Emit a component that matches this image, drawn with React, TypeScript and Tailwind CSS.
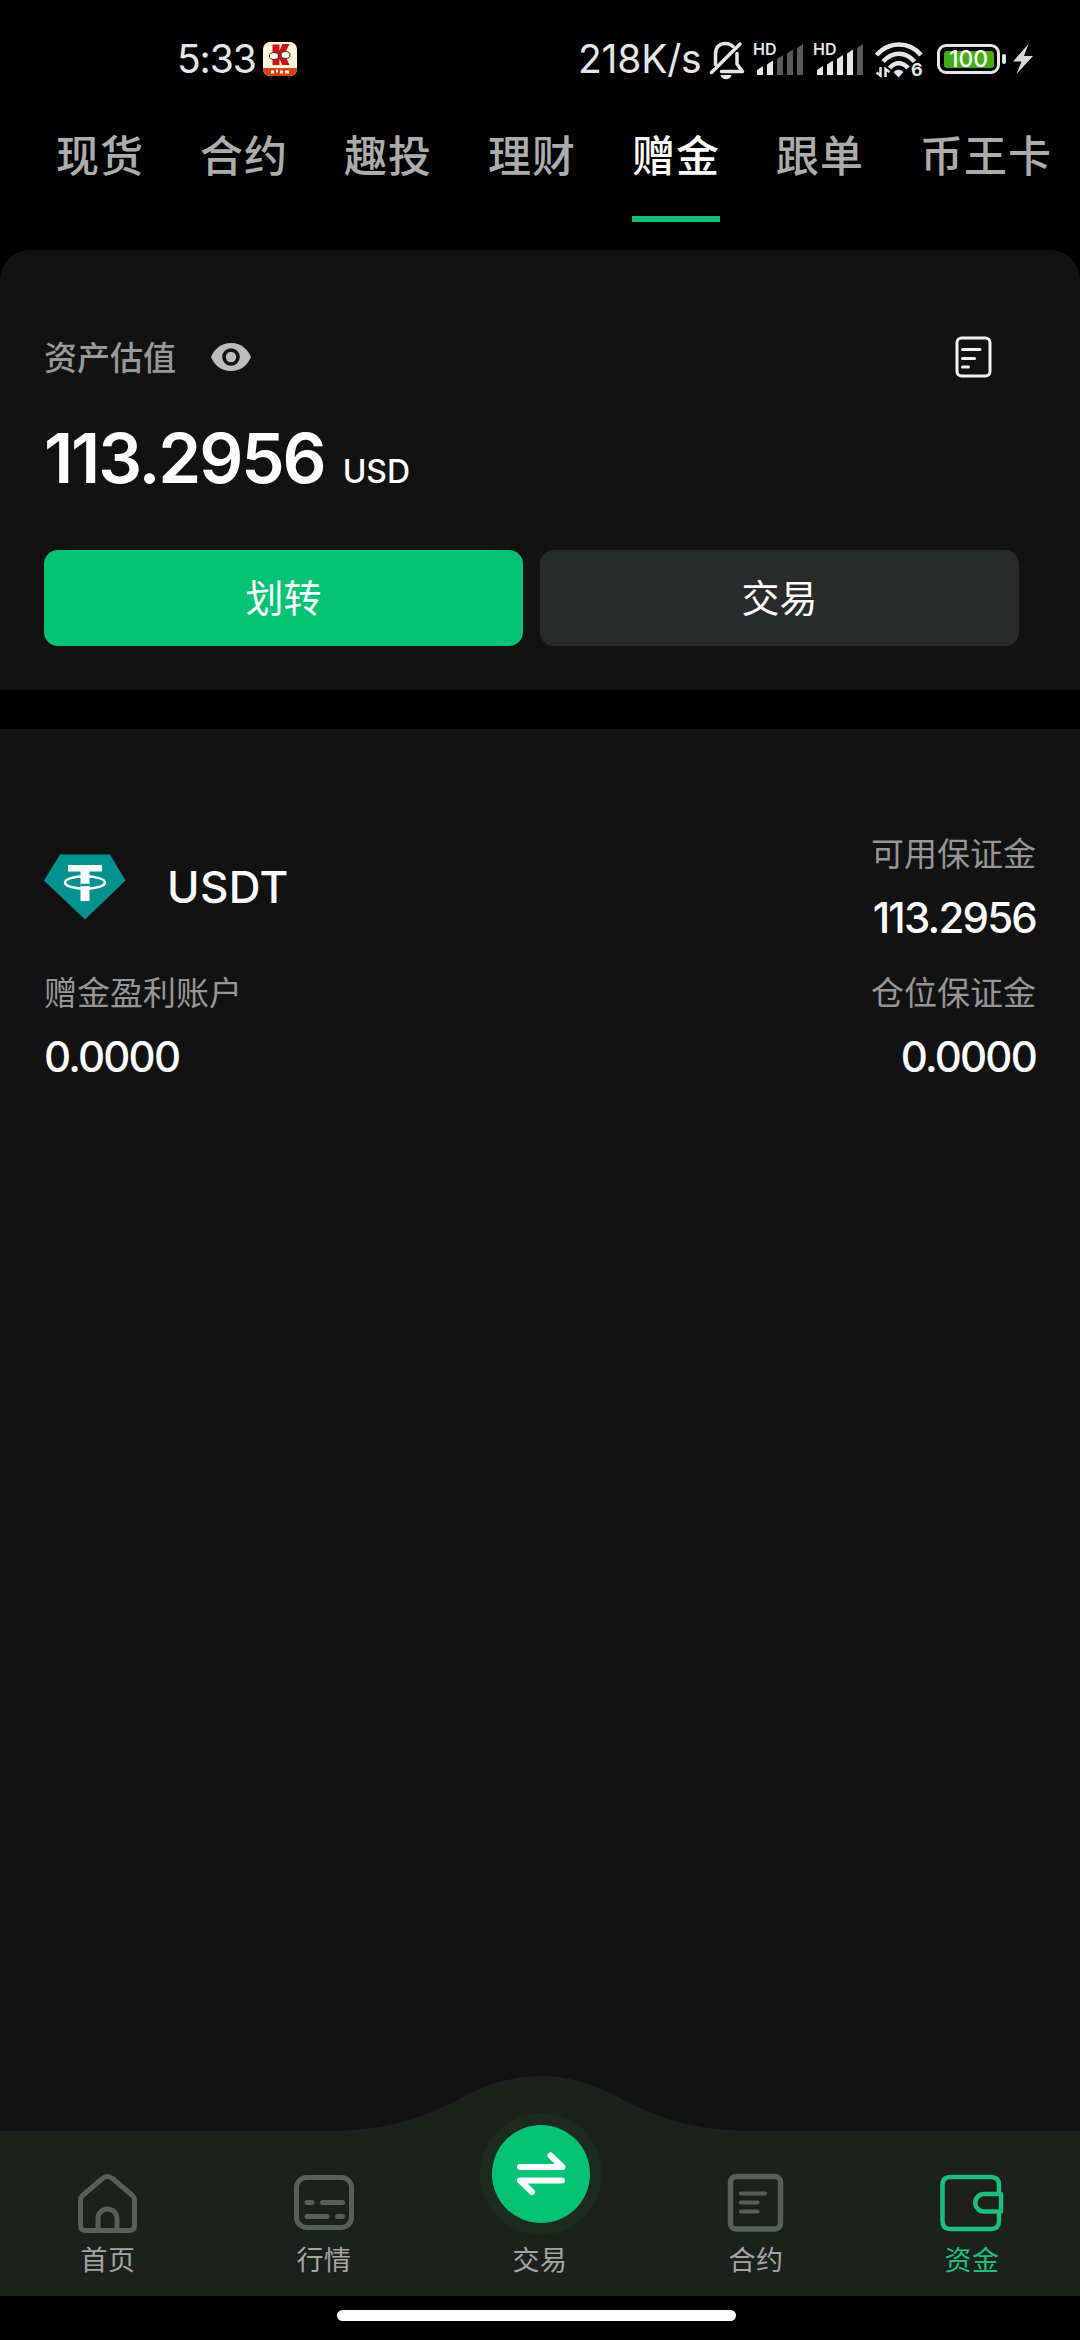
import React from 'react';

const CJK = "font-['Noto_Sans_CJK_SC',sans-serif]";
const LATIN = "font-['Inter','Noto_Sans_CJK_SC',sans-serif]";

const TABS = ['现货', '合约', '趣投', '理财', '赠金', '跟单', '币王卡'];
const ACTIVE_TAB = '赠金';

const SignalBars: React.FC<{ lit: number }> = ({ lit }) => (
  <div className="relative w-[50px] h-[34px]">
    <span className="absolute -left-[3px] top-0 font-['Inter',sans-serif] text-[16px] leading-[14px] font-semibold">HD</span>
    <svg width="50" height="34" viewBox="0 0 50 34">
      {['M1 28l6-4v9h-6z', 'M11 22.500l6-4v14.500h-6z', 'M21 17l6-4v20h-6z', 'M31 11.500l6-4v25.500h-6z', 'M41 6l6-4v31h-6z'].map((d, i) => (
        <path key={d} d={d} fill={i < lit ? '#e6e6e6' : '#5a5a5a'} />
      ))}
    </svg>
  </div>
);

const StatusBar = () => (
  <header className="flex h-[110px] items-start pt-[38px] pl-[177px] pr-[47px] text-[#e6e6e6]">
    <span className="w-[82px] whitespace-nowrap font-['Inter',sans-serif] text-[39px] leading-[42px] tracking-[-1.1px]">5:33</span>
    <svg className="ml-[4px] mt-1" width="34" height="34" viewBox="0 0 34 34">
      <rect width="34" height="34" rx="7" fill="#fdf6d8" />
      <path d="M0 26h34v1a7 7 0 0 1-7 7H7a7 7 0 0 1-7-7z" fill="#d8431f" />
      <path d="M9.500 2.500h7v6l3-6.500h7l-5 10 5 11h-7l-3-6v6h-7z" fill="#c81414" />
      <ellipse cx="11" cy="14" rx="4.500" ry="3.400" fill="#fff" stroke="#33211c" strokeWidth="1" />
      <ellipse cx="22.500" cy="13" rx="4.500" ry="3.400" fill="#fff" stroke="#33211c" strokeWidth="1" />
      <path d="M8 30h3m2-1h2m2 1h3m2 0h4" stroke="#fff3d0" strokeWidth="3" />
    </svg>

    <div className="ml-auto flex items-start">
      <span className="w-[124px] whitespace-nowrap font-['Inter',sans-serif] text-[39px] leading-[42px] tracking-[-0.2px]">218K/s</span>
      <svg className="ml-[7px] mt-[2px]" width="36" height="40" viewBox="0 0 36 40" fill="none" stroke="#e6e6e6" strokeWidth="3.500" strokeLinecap="round">
        <path d="M2.500 32.500L31 4" />
        <path d="M6.500 24.500V14C6.500 7 11 3.500 16.500 3.500c3 0 5.500 1 7.500 3" />
        <path d="M28 13.500v10.500l5.500 7.500H12.500" strokeLinejoin="round" />
        <path d="M11.500 35h11c-.5 3-3 4.300-5.500 4.300s-5-1.300-5.500-4.300z" fill="#e6e6e6" stroke="none" />
      </svg>
      <div className="ml-[11px] mt-[4px]"><SignalBars lit={2} /></div>
      <div className="ml-[10px] mt-[4px]"><SignalBars lit={4} /></div>
      <div className="relative ml-[9px] mt-[4px] h-9 w-12">
        <svg width="48" height="36" viewBox="0 0 48 36" fill="none" stroke="#e6e6e6" strokeWidth="4.500">
          <path d="M1.500 13C14 -1 34 -1 46 13" />
          <path d="M8 19.500c9.500-10.500 22.500-10.500 31.500 0" />
          <path d="M14.500 26c5.500-6.500 13-6.500 18.500 0" />
          <path d="M18.500 30q5-4.500 10 0l-5 5.500z" fill="#e6e6e6" stroke="none" />
          <path d="M5.500 25v8.500l-4-3M10.500 35v-8l4 3" strokeWidth="2.500" />
        </svg>
        <span className="absolute left-[36px] top-[20px] font-['Inter',sans-serif] text-[18px] leading-[16px] font-bold">6</span>
      </div>
      <div className="ml-[14px] mt-[6px] flex items-center">
        <div className="flex h-[30px] w-[63px] rounded-[9px] border-[3px] border-[#e6e6e6] p-[3.500px]">
          <div className="flex flex-1 items-center justify-center rounded-[3px] bg-[#45ab12] font-['Inter',sans-serif] text-[23px] leading-none font-medium text-white">100</div>
        </div>
        <div className="ml-[2px] h-[10px] w-1 rounded-[2px] bg-[#e6e6e6]" />
        <svg className="ml-[7px]" width="20" height="30" viewBox="0 0 20 30">
          <path d="M15.500 0L0 17.500h8.500L3.500 30 20 12h-9z" fill="#d8d8d8" />
        </svg>
      </div>
    </div>
  </header>
);

const TabBar = () => (
  <nav className={`flex h-[140px] gap-14 pl-14 ${CJK}`}>
    {TABS.map((tab) => (
      <div
        key={tab}
        className={`flex h-[112px] shrink-0 flex-col whitespace-nowrap text-[43px] leading-[86px] font-medium tracking-[1px] ${tab === ACTIVE_TAB ? 'border-b-[6px] border-[#14bf7a] text-white' : 'text-[#acacac]'}`}
      >
        {tab}
      </div>
    ))}
  </nav>
);

const BalanceCard = () => (
  <section className="h-[440px] rounded-t-[30px] bg-[#121212] px-11 pt-[86px]">
    <div className="flex h-[42px] items-center">
      <span className={`-mt-[3px] text-[33px] leading-[42px] font-medium text-[#999999] ${CJK}`}>资产估值</span>
      <svg className="ml-[35px]" width="40" height="28" viewBox="0 0 40 28">
        <path d="M20 0C31 0 37 7 40 14 37 21 31 28 20 28S3 21 0 14C3 7 9 0 20 0z" fill="#bdbdbd" />
        <circle cx="20" cy="14" r="7" fill="none" stroke="#121212" strokeWidth="3.600" />
      </svg>
      <svg className="ml-auto mr-[44px]" width="37" height="42" viewBox="0 0 37 42" fill="none" stroke="#f2f2f2" strokeWidth="3" strokeLinecap="round">
        <rect x="2" y="2" width="33" height="38" rx="4.500" />
        <path d="M7.500 13.500h17.500M7.500 22.500h12M7.500 31h6" />
      </svg>
    </div>
    <div className={`mt-[40px] flex h-[80px] items-baseline text-white ${LATIN}`}>
      <span className="text-[69px] leading-[80px] font-semibold tracking-[-2.1px]">113.2956</span>
      <span className="ml-[18px] text-[32px] font-medium">USD</span>
    </div>
    <div className={`mt-[52px] flex gap-[17px] text-[38px] leading-[92px] text-white ${CJK}`}>
      <button className="h-24 w-[479px] rounded-[14px] bg-[#05c275] pb-1">划转</button>
      <button className="h-24 w-[479px] rounded-[14px] bg-[#292b2a] pb-1">交易</button>
    </div>
  </section>
);

const UsdtIcon = () => (
  <svg width="82" height="66" viewBox="0 0 82 66">
    <path d="M16 .5h50L81.500 26.500 41 65.500 0 26.500z" fill="#03928e" />
    <path d="M24 11h34v6.500H45.500V47h-9V17.500H24z" fill="#fff" />
    <ellipse cx="41" cy="28.500" rx="20" ry="6.200" fill="none" stroke="#fff" strokeWidth="2.500" />
    <path d="M36.500 31h9" stroke="#03928e" strokeWidth="2.500" />
  </svg>
);

const Stat: React.FC<{ label: string; value: string; right?: boolean }> = ({ label, value, right }) => (
  <div className={right ? 'text-right' : 'text-left'}>
    <p className={`text-[33px] leading-[39px] text-[#969696] ${CJK}`}>{label}</p>
    <p className={`mt-[21px] text-[42px] leading-[50px] font-medium tracking-[-1.8px] text-white ${LATIN}`}>{value}</p>
  </div>
);

const AssetList = () => (
  <section className="mt-[39px] flex-1 bg-[#121212] pl-11 pr-[44px] pt-[104px]">
    <div className="flex h-[139px] justify-between">
      <div className="flex h-[66px] items-center mt-[21px]">
        <UsdtIcon />
        <span className={`ml-[41px] text-[44px] leading-[50px] font-medium tracking-[0.4px] text-white ${LATIN}`}>USDT</span>
      </div>
      <Stat label="可用保证金" value="113.2956" right />
    </div>
    <div className="flex justify-between">
      <Stat label="赠金盈利账户" value="0.0000" />
      <Stat label="仓位保证金" value="0.0000" right />
    </div>
  </section>
);

const NAV_ITEMS = [
  {
    label: '首页',
    icon: (
      <>
        <path d="M5.500 29Q5.500 26.500 7.500 24.500L27.500 7.500q5-4 10 0L57.500 24.500q2 2 2 4.500V54.500q0 5-5 5h-44q-5 0-5-5z" />
        <path d="M23 59.500V47.500a9.500 9.500 0 0 1 19 0v12" />
      </>
    ),
  },
  {
    label: '行情',
    icon: (
      <>
        <rect x="5.500" y="6.500" width="55" height="50" rx="10" />
        <path d="M16 31.500h5M31.500 31.500h20M16 45.500h20M46.500 45.500h5" />
      </>
    ),
  },
  { label: '交易', icon: null },
  {
    label: '合约',
    icon: (
      <>
        <rect x="7.500" y="5.500" width="50" height="52.500" rx="5.500" strokeWidth="5.500" />
        <path d="M18 22.500h24M18 31.500h16.500M18 40.500h16.500" strokeWidth="4.200" />
      </>
    ),
  },
  {
    label: '资金',
    icon: (
      <>
        <path d="M60 22.500V14q0-8-8-8H11.500q-8 0-8 8v36q0 8 8 8H52q8 0 8-8V40.500" strokeWidth="4.500" strokeLinecap="butt" />
        <path d="M62 23H45a8.500 8.500 0 0 0 0 17.500h17z" strokeWidth="4.500" />
      </>
    ),
  },
];

const BottomNav = () => (
  <nav className="relative h-[165px] shrink-0">
    {/* bar background with the raised hump in the middle */}
    <svg className="absolute left-0 -top-[55px]" width="1080" height="220" viewBox="0 0 1080 220">
      <path d="M0 55H325C395 55 430 38 463 21C490 7 515 0 540.500 0S591 7 618 21C651 38 686 55 756 55H1080V220H0z" fill="#1d211d" />
    </svg>
    <div className="relative grid grid-cols-5">
      {NAV_ITEMS.map((item) => {
        const active = item.label === '资金';
        return (
          <div key={item.label} className="flex h-[165px] flex-col items-center">
            {item.icon ? (
              <svg className="mt-[40px]" width="66" height="66" viewBox="0 0 66 66" fill="none" stroke={active ? '#1bc07b' : '#56605a'} strokeWidth="5" strokeLinecap="round" strokeLinejoin="round">
                {item.icon}
              </svg>
            ) : (
              <svg className="-mt-[18px] ml-[2px]" width="124" height="124" viewBox="0 0 124 124">
                <circle cx="62" cy="61" r="61" fill="#1c2a1f" />
                <circle cx="62" cy="61" r="49" fill="#05c275" />
                <path d="M41 54h42.500L71.500 42.500M83 67.500H41l12 11.500" fill="none" stroke="#fff" strokeWidth="6" strokeLinecap="round" strokeLinejoin="round" />
              </svg>
            )}
            <span className={`mt-auto mb-[17px] text-[27px] leading-[40px] tracking-[0.5px] ${CJK} ${active ? 'text-[#1bc07b]' : 'text-[#a3a6a3]'}`}>{item.label}</span>
          </div>
        );
      })}
    </div>
  </nav>
);

export default function App() {
  return (
    <div className="flex h-[2340px] w-[1080px] flex-col overflow-hidden bg-black">
      <StatusBar />
      <TabBar />
      <BalanceCard />
      <AssetList />
      <BottomNav />
      <div className="flex h-11 shrink-0 pt-[14px] pl-[337px]">
        <div className="h-[11px] w-[399px] rounded-full bg-white" />
      </div>
    </div>
  );
}
